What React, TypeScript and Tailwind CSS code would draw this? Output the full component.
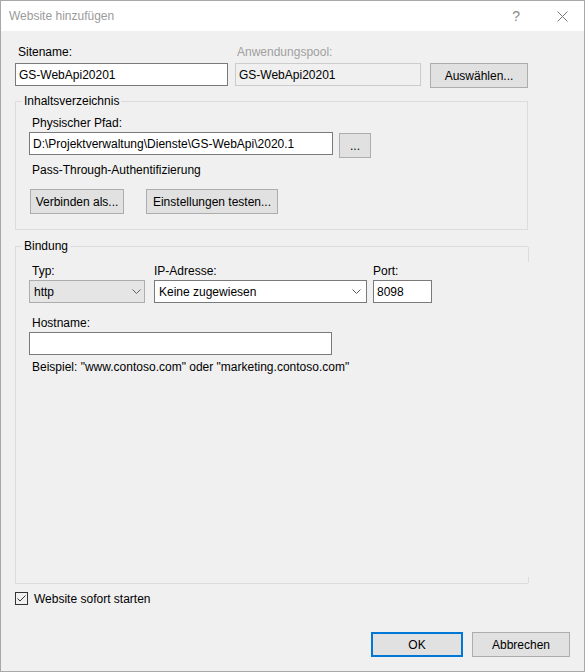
import React from 'react';

// Windows-style "add website" dialog (IIS manager look)

const Label: React.FC<{ children: React.ReactNode; className?: string }> = ({ children, className = '' }) => (
  <div className={`h-[17px] leading-[17px] whitespace-nowrap ${className}`}>{children}</div>
);

const TextBox: React.FC<{ value?: string; className?: string; disabled?: boolean }> = ({ value = '', className = '', disabled }) => (
  <div
    className={`h-[23px] flex items-center px-[3px] whitespace-nowrap border ${
      disabled ? 'bg-[#f0f0f0] border-[#cccccc]' : 'bg-white border-[#7a7a7a]'
    } ${className}`}
  >
    {value}
  </div>
);

const Button: React.FC<{ children: React.ReactNode; className?: string; primary?: boolean }> = ({ children, className = '', primary }) => (
  <div
    className={`h-[25px] flex items-center justify-center bg-[#e1e1e1] whitespace-nowrap ${
      primary ? 'border-2 border-[#0078d7]' : 'border border-[#adadad]'
    } ${className}`}
  >
    {children}
  </div>
);

const Chevron = () => (
  <svg width="9" height="5" viewBox="0 0 9 5" className="shrink-0">
    <path d="M0.5 0.5 L4.5 4.5 L8.5 0.5" fill="none" stroke="#606060" strokeWidth="1" />
  </svg>
);

const ComboBox: React.FC<{ value: string; className?: string; readOnly?: boolean }> = ({ value, className = '', readOnly }) => (
  <div
    className={`h-[23px] flex items-center justify-between pl-[4px] border ${
      readOnly ? 'bg-[#e5e5e5] border-[#adadad] pr-[3px]' : 'bg-white border-[#7a7a7a] pr-[5px]'
    } ${className}`}
  >
    <span className="whitespace-nowrap">{value}</span>
    <Chevron />
  </div>
);

const Legend: React.FC<{ children: React.ReactNode }> = ({ children }) => (
  <span className="absolute left-[6px] -top-[9px] px-[2px] leading-[16px] bg-[#f0f0f0]">{children}</span>
);

export default function App() {
  return (
    <div className="w-[585px] h-[672px] border border-[#a8a8a8] bg-[#f0f0f0] flex flex-col text-[12px] text-black font-['Liberation_Sans',Arial,sans-serif]">
      {/* title bar */}
      <div className="h-[30px] bg-white flex items-center pl-[8px] shrink-0">
        <span className="text-[#9a9a9a]">Website hinzufügen</span>
        <span className="ml-auto text-[14px] text-[#8a8a8a] leading-none">?</span>
        <svg width="11" height="11" viewBox="0 0 11 11" className="ml-[37px] mr-[16px]">
          <path d="M0.5 0.5 L10.5 10.5 M10.5 0.5 L0.5 10.5" fill="none" stroke="#7a7a7a" strokeWidth="1" />
        </svg>
      </div>

      <div className="flex-1 flex flex-col pl-[14px]">
        {/* site name / app pool */}
        <div className="mt-[13px] flex items-start">
          <div className="w-[213px]">
            <Label className="pl-[3px] h-[19px]">Sitename:</Label>
            <TextBox value="GS-WebApi20201" />
          </div>
          <div className="w-[186px] ml-[7px]">
            <Label className="pl-[2px] h-[19px] text-[#a0a0a0]">Anwendungspool:</Label>
            <TextBox value="GS-WebApi20201" disabled />
          </div>
          <Button className="w-[98px] ml-[9px] mt-[19px]">Auswählen...</Button>
        </div>

        {/* content directory */}
        <div className="relative mt-[13px] w-[513px] h-[129px] border border-[#dcdcdc] pt-[12px] pl-[13px]">
          <Legend>Inhaltsverzeichnis</Legend>
          <Label className="pl-[3px] h-[18px] leading-[18px]">Physischer Pfad:</Label>
          <div className="flex items-start">
            <TextBox value="D:\Projektverwaltung\Dienste\GS-WebApi\2020.1" className="w-[304px]" />
            <Button className="w-[32px] ml-[6px] mt-[1px]">...</Button>
          </div>
          <div className="mt-[4px] h-[16px] leading-[16px] pl-[3px]">Pass-Through-Authentifizierung</div>
          <div className="mt-[11px] flex">
            <Button className="w-[94px] ml-[1px]">Verbinden als...</Button>
            <Button className="w-[132px] ml-[22px]">Einstellungen testen...</Button>
          </div>
        </div>

        {/* binding */}
        <div className="relative mt-[16px] w-[513px] h-[338px] border-l border-t border-b border-[#dcdcdc] pt-[16px] pl-[13px]">
          <Legend>Bindung</Legend>
          <div className="absolute -right-px top-0 w-px h-[15px] bg-[#dcdcdc]" />
          <div className="absolute -right-px bottom-0 w-px h-[6px] bg-[#dcdcdc]" />
          <div className="flex">
            <div className="w-[116px]">
              <Label className="pl-[3px]">Typ:</Label>
              <ComboBox value="http" readOnly />
            </div>
            <div className="w-[213px] ml-[9px]">
              <Label>IP-Adresse:</Label>
              <ComboBox value="Keine zugewiesen" />
            </div>
            <div className="w-[59px] ml-[6px]">
              <Label>Port:</Label>
              <TextBox value="8098" />
            </div>
          </div>
          <Label className="mt-[11px] pl-[3px] h-[18px] leading-[18px]">Hostname:</Label>
          <TextBox className="w-[303px]" />
          <div className="mt-[4px] h-[16px] leading-[16px] pl-[3px]">
            Beispiel: "www.contoso.com" oder "marketing.contoso.com"
          </div>
        </div>

        {/* start immediately */}
        <div className="mt-[8px] flex items-center h-[13px]">
          <div className="w-[13px] h-[13px] border border-[#333333] bg-[#f0f0f0] flex items-center justify-center">
            <svg width="11" height="11" viewBox="0 0 11 11">
              <path d="M1.5 5.5 L4 8 L9.5 2.5" fill="none" stroke="#333333" strokeWidth="1" />
            </svg>
          </div>
          <span className="ml-[6px] leading-[14px]">Website sofort starten</span>
        </div>

        {/* dialog buttons */}
        <div className="mt-[27px] flex justify-end gap-[9px] pr-[14px]">
          <Button primary className="w-[92px]">OK</Button>
          <Button className="w-[98px]">Abbrechen</Button>
        </div>
      </div>
    </div>
  );
}
